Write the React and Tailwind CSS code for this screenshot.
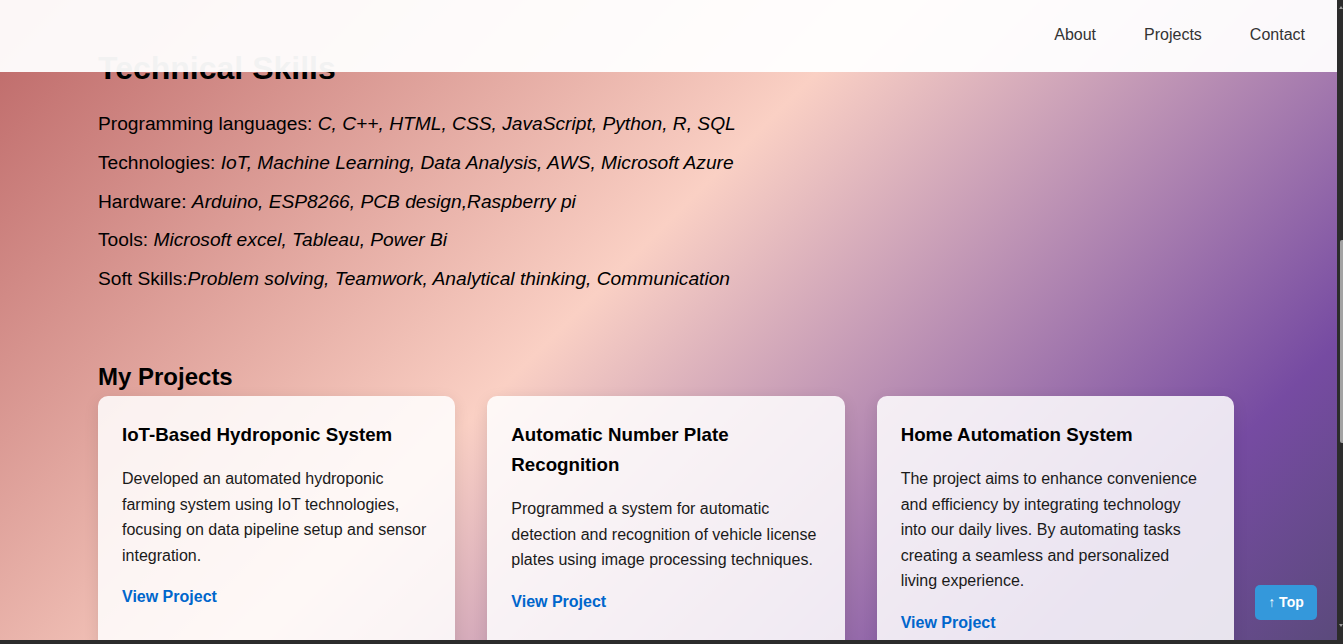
import React from 'react';

const skills = [
    { label: "Programming languages: ", value: "C, C++, HTML, CSS, JavaScript, Python, R, SQL" },
    { label: "Technologies: ", value: "IoT, Machine Learning, Data Analysis, AWS, Microsoft Azure" },
    { label: "Hardware: ", value: "Arduino, ESP8266, PCB design,Raspberry pi" },
    { label: "Tools: ", value: "Microsoft excel, Tableau, Power Bi" },
    { label: "Soft Skills:", value: "Problem solving, Teamwork, Analytical thinking, Communication" }
];

const projects = [
    {
        title: "IoT-Based Hydroponic System",
        description: "Developed an automated hydroponic farming system using IoT technologies, focusing on data pipeline setup and sensor integration."
    },
    {
        title: "Automatic Number Plate Recognition",
        description: "Programmed a system for automatic detection and recognition of vehicle license plates using image processing techniques."
    },
    {
        title: "Home Automation System",
        description: "The project aims to enhance convenience and efficiency by integrating technology into our daily lives. By automating tasks creating a seamless and personalized living experience."
    }
];

export default function App() {
    return (
        <div className="w-[1343px] h-[644px] overflow-hidden bg-[#2c2c2c] font-['Liberation_Sans',Arial,sans-serif]">
            <div className="flex h-[640px]">
                {/* Viewport */}
                <div className="relative w-[1337px] h-[640px] overflow-hidden bg-[linear-gradient(135deg,#bc6666_0%,#fad0c4_45%,#764ba2_85%,#5b4a7c_100%)]">
                    <main className="ml-[98px] w-[1136px] pt-[43px] text-black">
                        {/* Skills */}
                        <section>
                            <h2 className="text-[32px] font-bold leading-[1.6] mb-[15px]">Technical Skills</h2>
                            {skills.map((s) => (
                                <p key={s.label} className="text-[19.2px] leading-[1.6] mb-[8px]">
                                    {s.label}<em>{s.value}</em>
                                </p>
                            ))}
                        </section>

                        {/* Projects */}
                        <section className="mt-[63px]">
                            <h2 className="text-[24px] font-bold leading-[1.6]">My Projects</h2>
                            <div className="grid grid-cols-3 gap-[32px]">
                                {projects.map((p) => (
                                    <div key={p.title} className="bg-white/85 rounded-[10px] p-[24px] shadow-[0_4px_15px_rgba(0,0,0,0.1)]">
                                        <h3 className="text-[18.72px] font-bold leading-[1.6] mb-[16px]">{p.title}</h3>
                                        <p className="text-[16px] leading-[1.6] mb-[16px] text-[#1a1a1a]">{p.description}</p>
                                        <a href="#" className="block text-[16px] leading-[1.6] font-bold text-[#0066cc]">View Project</a>
                                    </div>
                                ))}
                            </div>
                        </section>
                    </main>

                    {/* Fixed header */}
                    <header className="absolute top-0 left-0 right-0 h-[72px] bg-white/95 flex items-center justify-end gap-[48px] pr-[32px]">
                        <a href="#" className="text-[16px] text-[#333] -mt-[2px]">About</a>
                        <a href="#" className="text-[16px] text-[#333] -mt-[2px]">Projects</a>
                        <a href="#" className="text-[16px] text-[#333] -mt-[2px]">Contact</a>
                    </header>

                    {/* Back to top */}
                    <button className="absolute right-[20px] bottom-[20px] w-[62px] h-[35px] rounded-[5px] bg-[#3498db] text-white text-[14px] font-bold flex items-center justify-center">
                        ↑ Top
                    </button>
                </div>

                {/* Scrollbar */}
                <div className="relative w-[6px] h-[640px] bg-[#2c2c2c]">
                    <div className="absolute left-[2px] top-[6px] w-0 h-0 border-l-[2px] border-r-[2px] border-b-[3px] border-l-transparent border-r-transparent border-b-[#9a9a9a]" />
                    <div className="absolute left-[3px] right-0 top-[240px] h-[203px] rounded-l-[2px] bg-[#a3a3a3]" />
                    <div className="absolute left-[2px] top-[624px] w-0 h-0 border-l-[2px] border-r-[2px] border-t-[3px] border-l-transparent border-r-transparent border-t-[#9a9a9a]" />
                </div>
            </div>
        </div>
    );
}
